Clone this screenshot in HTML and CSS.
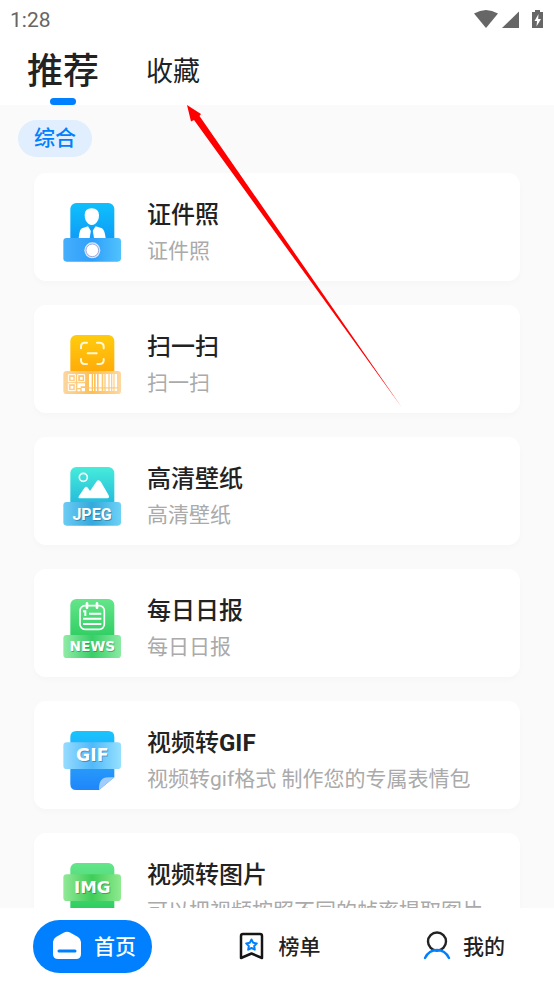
FILE: index.html
```html
<!DOCTYPE html>
<html lang="zh-CN">
<head>
<meta charset="utf-8">
<meta name="viewport" content="width=device-width, initial-scale=1">
<title>推荐</title>
<link rel="stylesheet" href="styles.css">
</head>
<body>
<div class="status">
  <span>1:28</span>
  <svg class="status-icons" viewBox="0 0 70 20" aria-hidden="true">
    <path d="M0 3.500Q12-3.500 24 3.500L12 18Z"/>
    <path d="M45 1.500V18H28Z"/>
    <path d="M61 0h5v2h3v16H58V2h3z"/>
    <path class="bolt" d="M64.500 4L60.500 11h2.500l-.500 5.500L67 9h-2.800z"/>
  </svg>
</div>
<header class="tabs">
  <button class="tab active" type="button">推荐</button>
  <button class="tab" type="button">收藏</button>
</header>
<main class="content">
  <button class="chip" type="button">综合</button>
  <ul class="list">
    <li><a class="card" href="#">
      <svg class="icon" viewBox="36 30 180 186" aria-hidden="true">
        <defs>
          <linearGradient id="b1" x2="0" y2="1"><stop offset="0" stop-color="#0fc0fc"/><stop offset="1" stop-color="#0e8df5"/></linearGradient>
          <linearGradient id="b2" x2="1" y2="0"><stop offset="0" stop-color="#45aefc"/><stop offset=".5" stop-color="#2fa0fa"/><stop offset="1" stop-color="#50c2fd"/></linearGradient>
        </defs>
        <rect x="61" y="36" width="132" height="150" rx="18" fill="url(#b1)"/>
        <path d="M104 72Q104 52 125 52T147 72Q147 90 136 98Q125 106 115 98Q104 90 104 72Z" fill="#fff"/>
        <path d="M86 142Q88 115 96 112L114 106L125 124L137 106L156 112Q164 117 167 142Z" fill="#fff"/>
        <path d="M120 109h11l-3 8 4 24h-13l4-24z" fill="#159ff8"/>
        <rect x="40" y="141" width="173" height="71" rx="10" fill="url(#b2)"/>
        <circle cx="127" cy="178" r="24" fill="#d7eafe"/><circle cx="127" cy="178" r="19" fill="#fff" stroke="#747fd0" stroke-width="2"/>
      </svg>
      <span class="text"><strong>证件照</strong><small>证件照</small></span></a></li>
    <li><a class="card" href="#">
      <svg class="icon" viewBox="36 30 180 186" aria-hidden="true">
        <defs>
          <linearGradient id="o1" x2="0" y2="1"><stop offset="0" stop-color="#ffcc0d"/><stop offset="1" stop-color="#ff9f08"/></linearGradient>
          <linearGradient id="o2" x2="1" y2="0"><stop offset="0" stop-color="#fcd6a0"/><stop offset=".5" stop-color="#fcbf55"/><stop offset="1" stop-color="#fdd8a2"/></linearGradient>
        </defs>
        <rect x="61" y="36" width="132" height="150" rx="18" fill="url(#o1)"/>
        <path d="M93 76V70Q93 59 104 59h7M141 59h7Q161 59 161 70v6M161 108v4Q161 123 149 123h-7M111 123h-7Q93 123 93 112v-4M113 91h27" fill="none" stroke="#fff8d8" stroke-width="6" stroke-linecap="round"/>
        <rect x="40" y="144" width="173" height="69" rx="10" fill="url(#o2)"/>
        <g fill="none" stroke="#fff" stroke-width="3"><path d="M55 155h21v21H55zM83 155h21v21H83zM55 182h21v21H55z"/></g>
        <g fill="#fff"><path d="M62 162h8v8h-8zM90 162h8v8h-8zM62 189h8v8h-8zM82 181h23v9H92v5H82zM82 199h9v6h-9zM95 195h10v10H95z"/>
        <path d="M117 153h8v51h-8zM129 153h3v51h-3zM137 153h4v51h-4zM146 153h9v51h-9zM160 153h3v51h-3zM167 153h8v51h-8zM179 153h4v51h-4zM187 153h3v51h-3zM194 153h7v51h-7z"/></g>
        <path d="M115 192h88v5h-88z" fill="#fbc574" opacity=".6"/>
      </svg>
      <span class="text"><strong>扫一扫</strong><small>扫一扫</small></span></a></li>
    <li><a class="card" href="#">
      <svg class="icon" viewBox="36 30 180 186" aria-hidden="true">
        <defs>
          <linearGradient id="t1" x2="0" y2="1"><stop offset="0" stop-color="#46ecda"/><stop offset="1" stop-color="#18a9dc"/></linearGradient>
          <linearGradient id="t2" x2="1" y2="0"><stop offset="0" stop-color="#6bccf4"/><stop offset=".5" stop-color="#35a8dd"/><stop offset="1" stop-color="#6dd2f7"/></linearGradient>
        </defs>
        <rect x="61" y="36" width="132" height="150" rx="18" fill="url(#t1)"/>
        <circle cx="100" cy="67" r="12" fill="none" stroke="#f2fffe" stroke-width="5"/>
        <path d="M88 130Q83 129 87 123L103 99Q108 91 114 99L120 108L139 80Q146 71 153 81L176 121Q179 129 173 130Z" fill="#fff"/>
        <rect x="40" y="141" width="173" height="71" rx="10" fill="url(#t2)"/>
        <text class="label narrow shade" x="129" y="197" font-size="48">JPEG</text>
        <text class="label narrow" x="126" y="194" font-size="48">JPEG</text>
      </svg>
      <span class="text"><strong>高清壁纸</strong><small>高清壁纸</small></span></a></li>
    <li><a class="card" href="#">
      <svg class="icon" viewBox="36 30 180 186" aria-hidden="true">
        <defs>
          <linearGradient id="g1" x2="0" y2="1"><stop offset="0" stop-color="#65e58b"/><stop offset="1" stop-color="#1fc755"/></linearGradient>
          <linearGradient id="g2" x2="1" y2="0"><stop offset="0" stop-color="#91eba6"/><stop offset=".5" stop-color="#39ce68"/><stop offset="1" stop-color="#8aeaa2"/></linearGradient>
        </defs>
        <rect x="61" y="36" width="132" height="150" rx="18" fill="url(#g1)"/>
        <rect x="90" y="56" width="73" height="71" rx="15" fill="none" stroke="#fff" stroke-width="5"/>
        <path d="M111 49v13M141 49v13" stroke="#fff" stroke-width="8" stroke-linecap="round"/>
        <path d="M117 80h37M99 95h55M99 111h55M99 73h7v14" fill="none" stroke="#fff" stroke-width="6"/>
        <rect x="40" y="144" width="173" height="69" rx="10" fill="url(#g2)"/>
        <text class="label shade" x="129" y="195" font-size="41">NEWS</text>
        <text class="label" x="127" y="192" font-size="41">NEWS</text>
      </svg>
      <span class="text"><strong>每日日报</strong><small>每日日报</small></span></a></li>
    <li><a class="card" href="#">
      <svg class="icon" viewBox="36 30 180 186" aria-hidden="true">
        <defs>
          <linearGradient id="f1" x2="0" y2="1"><stop offset="0" stop-color="#18c5fd"/><stop offset=".6" stop-color="#279bfa"/><stop offset="1" stop-color="#1f86fa"/></linearGradient>
          <linearGradient id="f2" x2="1" y2="0"><stop offset="0" stop-color="#97dcff"/><stop offset=".5" stop-color="#51b9fa"/><stop offset="1" stop-color="#95e0ff"/></linearGradient>
        </defs>
        <path d="M79 36h96q18 0 18 18v121l-46 38H79q-18 0-18-18V54q0-18 18-18z" fill="url(#f1)"/>
        <path d="M193 175l-46 38q-2-38 28-38z" fill="#a0cdfd"/>
        <rect x="40" y="70" width="173" height="80" rx="10" fill="url(#f2)"/>
        <text class="label shade" x="130" y="128" font-size="52">GIF</text>
        <text class="label" x="127" y="125" font-size="52">GIF</text>
      </svg>
      <span class="text"><strong>视频转<b>GIF</b></strong><small>视频转gif格式 制作您的专属表情包</small></span></a></li>
    <li><a class="card" href="#">
      <svg class="icon" viewBox="36 30 180 186" aria-hidden="true">
        <defs>
          <linearGradient id="i2" x2="1" y2="0"><stop offset="0" stop-color="#92e997"/><stop offset=".5" stop-color="#3fcd59"/><stop offset="1" stop-color="#8fea8e"/></linearGradient>
        </defs>
        <rect x="61" y="36" width="132" height="177" rx="18" fill="url(#g1)"/>
        <rect x="40" y="70" width="173" height="80" rx="10" fill="url(#i2)"/>
        <text class="label shade" x="130" y="128" font-size="50">IMG</text>
        <text class="label" x="127" y="125" font-size="50">IMG</text>
      </svg>
      <span class="text"><strong>视频转图片</strong><small>可以把视频按照不同的帧率提取图片</small></span></a></li>
  </ul>
</main>
<nav class="nav">
  <a class="nav-item current" href="#">
    <svg viewBox="0 0 36 36" aria-hidden="true"><path d="M4 15q0-3 3-5l8-4.500q3-1.500 6 0l8 4.500q3 2 3 5v12q0 5-5 5H9q-5 0-5-5z" fill="#fff"/><path d="M10 24h16" stroke="#0080ff" stroke-width="3" stroke-linecap="round"/></svg>
    <span>首页</span></a>
  <a class="nav-item" href="#">
    <svg viewBox="0 0 36 36" fill="none" aria-hidden="true"><path d="M7 31V9q0-2 2-2h17q2 0 2 2v22l-10.500-4.500z" stroke="#151515" stroke-width="2.500" stroke-linejoin="round"/><path d="M17.500 12.500l1.700 3.300 3.600.600-2.600 2.600.600 3.700-3.300-1.700-3.300 1.700.600-3.700-2.600-2.600 3.600-.600z" stroke="#0080ff" stroke-width="2" stroke-linejoin="round"/></svg>
    <span>榜单</span></a>
  <a class="nav-item" href="#">
    <svg viewBox="0 0 36 36" fill="none" aria-hidden="true" stroke-width="2.400" stroke-linecap="round"><circle cx="19" cy="14.500" r="9" stroke="#222"/><path d="M7 31q4-8 12-8t12 8" stroke="#0080ff"/></svg>
    <span>我的</span></a>
</nav>
<svg class="arrow" viewBox="0 0 216 303" aria-hidden="true"><path d="M0 0L14 9L12.500 11L214.500 302L7 15L4 16.500Z" fill="#f00"/></svg>
</body>
</html>
```
FILE: styles.css
```css
* { box-sizing: border-box; }

body {
  margin: 0;
  height: 100vh;
  display: flex;
  flex-direction: column;
  background: #fff;
  color: #222;
  font-family: Roboto, "Noto Sans CJK SC", sans-serif;
}

button {
  border: 0;
  padding: 0;
  background: none;
  color: inherit;
  font: inherit;
}

a { color: inherit; text-decoration: none; }

.status {
  display: flex;
  align-items: center;
  justify-content: space-between;
  height: 40px;
  padding: 0 10px;
  color: #666;
  font-size: 21px;
  line-height: 40px;
}

.status-icons {
  width: 70px;
  height: 20px;
  fill: #666;
}

.status-icons .bolt { fill: #fff; }

.tabs {
  display: flex;
  gap: 47px;
  height: 65px;
  padding: 6px 27px 0;
}

.tab {
  display: flex;
  flex-direction: column;
  align-items: center;
  font-size: 27px;
  line-height: 52px;
}

.tab.active { font-size: 36px; font-weight: 500; }

.tab.active::after {
  content: "";
  width: 26px;
  height: 7px;
  border-radius: 4px;
  background: #0080ff;
}

.content {
  flex: 1;
  min-height: 0;
  overflow: hidden;
  padding-top: 15px;
  background: #fafafa;
}

.chip {
  display: block;
  margin-left: 18px;
  padding: 0 16px;
  border-radius: 19px;
  background: #e0eefd;
  color: #0080ff;
  font-size: 21px;
  font-weight: 500;
  line-height: 37px;
}

.list {
  display: flex;
  flex-direction: column;
  gap: 24px;
  margin: 16px 0 0;
  padding: 0 34px;
  list-style: none;
}

.card {
  display: flex;
  align-items: flex-start;
  gap: 25px;
  padding: 24px 28px 12px;
  border-radius: 12px;
  background: #fff;
  box-shadow: 0 3px 6px rgba(0, 0, 0, 0.02);
}

.icon { flex: none; width: 60px; height: 62px; margin-top: 4px; }

.label {
  fill: #fff;
  font-family: "DejaVu Sans", sans-serif;
  font-weight: 700;
  text-anchor: middle;
}

.label.narrow { font-family: "Roboto", sans-serif; }

.label.shade { fill: #000; opacity: 0.25; }

.text {
  display: flex;
  flex-direction: column;
  min-width: 0;
  line-height: 36px;
  white-space: nowrap;
}

.text strong { font-size: 24px; font-weight: 500; }
.text b { font-weight: 700; }
.text small { font-size: 21px; color: #aaa; }

.nav {
  display: flex;
  align-items: center;
  justify-content: space-between;
  height: 77px;
  padding: 0 33px;
  background: #fff;
}

.nav-item {
  display: flex;
  align-items: center;
  gap: 9px;
  height: 53px;
  padding: 0 16px 3px;
  border-radius: 27px;
  font-size: 21px;
  font-weight: 500;
}

.nav-item svg { width: 36px; height: 36px; }

.current { background: #0080ff; color: #fff; }

.arrow {
  position: absolute;
  top: 105px;
  left: 187px;
  width: 216px;
  height: 303px;
  pointer-events: none;
}
```
